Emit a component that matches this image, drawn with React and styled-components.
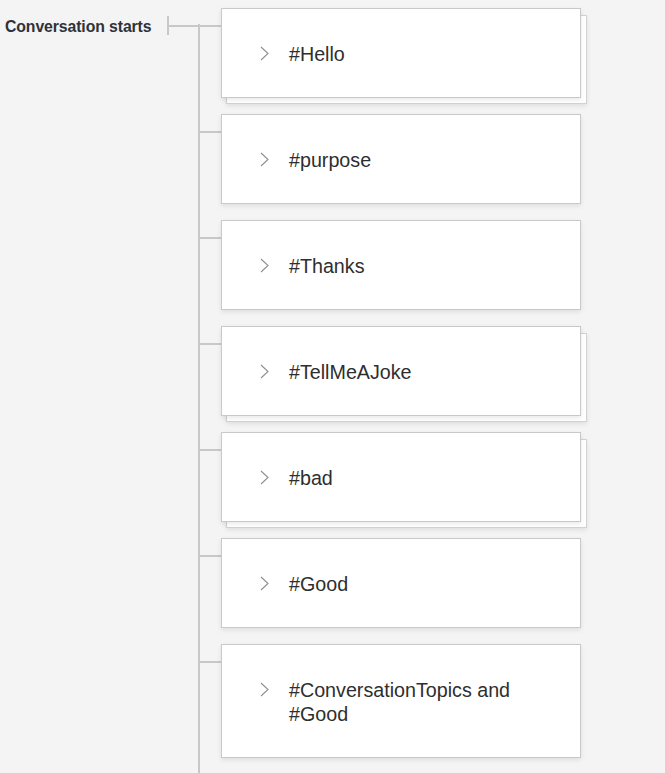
import React from "react";
import styled, { createGlobalStyle } from "styled-components";

const GlobalStyle = createGlobalStyle`
  html, body {
    margin: 0;
    padding: 0;
    background: #f4f4f4;
  }
  body {
    font-family: "Liberation Sans", Arial, Helvetica, sans-serif;
  }
`;

const Page = styled.div`
  display: flex;
  align-items: flex-start;
  padding-top: 8px;
  min-height: 100vh;
  box-sizing: border-box;
`;

const LabelCol = styled.div`
  width: 168px;
  flex-shrink: 0;
  padding-left: 5px;
  box-sizing: border-box;
`;

const Label = styled.div`
  margin-top: 9px;
  font-size: 15.8px;
  line-height: 20px;
  font-weight: bold;
  color: #2f3236;
  letter-spacing: -0.1px;
`;

const Tree = styled.div`
  position: relative;
  display: flex;
  flex-direction: column;
  gap: 16px;
  padding-bottom: 16px;
  isolation: isolate;

  &::before {
    content: "";
    position: absolute;
    left: 30px;
    top: 16px;
    bottom: 0;
    width: 2px;
    background: #c8c8c8;
  }
`;

const Row = styled.div`
  display: flex;
  align-items: flex-start;
`;

const Connector = styled.div`
  width: 53px;
  flex-shrink: 0;
  display: flex;
  align-items: center;
  height: 19px;
  margin-top: 8px;
  padding-left: ${(p) => (p.$first ? "0" : "30px")};
  box-sizing: border-box;
`;

const Tick = styled.div`
  width: 2px;
  height: 19px;
  background: #c8c8c8;
  margin-left: -1px;
`;

const Branch = styled.div`
  flex: 1;
  height: 2px;
  background: #c8c8c8;
`;

const Card = styled.div`
  position: relative;
  width: 360px;
  box-sizing: border-box;
  background: #fff;
  border: 1px solid #c9c9c9;
  box-shadow: 0 2px 5px rgba(0, 0, 0, 0.09);
  padding: 33px 40px 31px 38px;
  display: flex;
  align-items: flex-start;
  gap: 20px;

  ${(p) =>
    p.$stacked &&
    `
    &::before {
      content: "";
      position: absolute;
      top: 6px;
      left: 4px;
      right: -7px;
      bottom: -7px;
      background: #fff;
      border: 1px solid #d2d2d2;
      box-shadow: 0 2px 5px rgba(0, 0, 0, 0.09);
      z-index: -1;
    }
  `}
`;

const Chevron = styled.svg`
  flex-shrink: 0;
  margin-top: 4px;
`;

const Title = styled.div`
  font-size: 19.7px;
  line-height: 24px;
  color: #2e2e2e;
`;

const nodes = [
  { title: "#Hello", stacked: true },
  { title: "#purpose" },
  { title: "#Thanks" },
  { title: "#TellMeAJoke", stacked: true },
  { title: "#bad", stacked: true },
  { title: "#Good" },
  { title: "#ConversationTopics and #Good" },
];

const ChevronIcon = () => (
  <Chevron width="9" height="15" viewBox="0 0 9 15">
    <path d="M1 1 L8 7.5 L1 14" fill="none" stroke="#8e8e8e" strokeWidth="1.1" />
  </Chevron>
);

export default function App() {
  return (
    <>
      <GlobalStyle />
      <Page>
        <LabelCol>
          <Label>Conversation starts</Label>
        </LabelCol>
        <Tree>
          {nodes.map((node, index) => (
            <Row key={index}>
              <Connector $first={index === 0}>
                {index === 0 && <Tick />}
                <Branch />
              </Connector>
              <Card $stacked={node.stacked}>
                <ChevronIcon />
                <Title>{node.title}</Title>
              </Card>
            </Row>
          ))}
        </Tree>
      </Page>
    </>
  );
}
